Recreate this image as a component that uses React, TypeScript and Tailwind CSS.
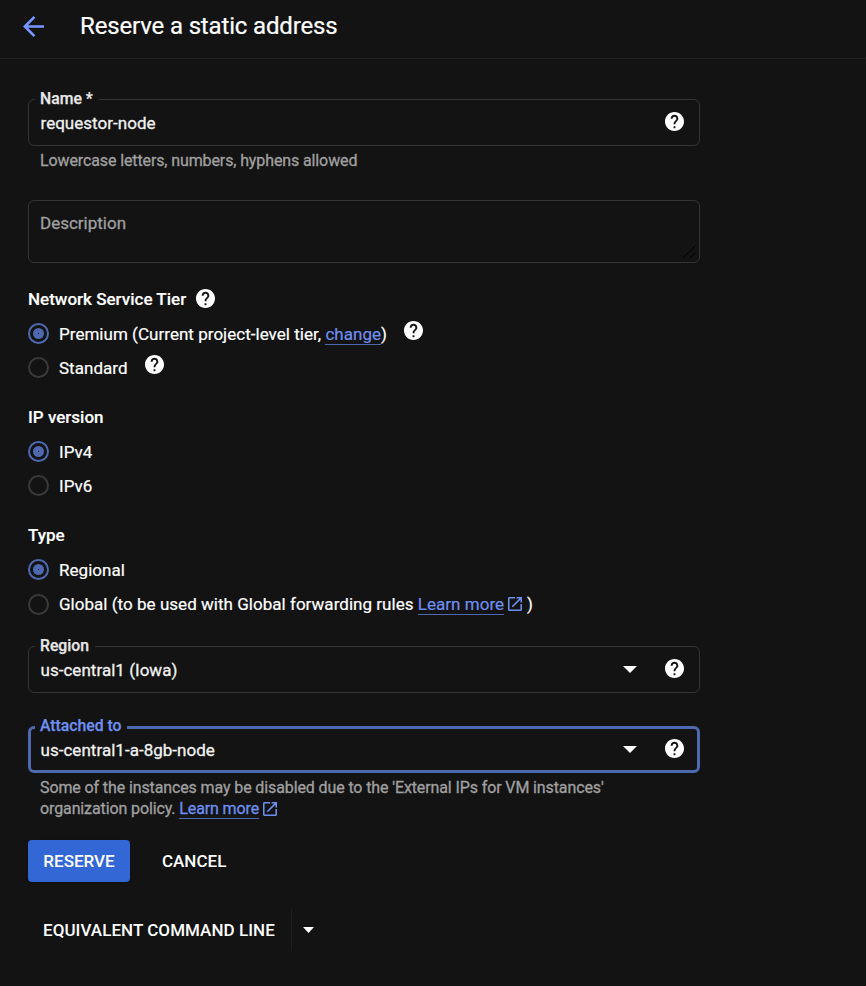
import type { ReactNode } from 'react';

function Help({ className = '' }: { className?: string }) {
  return (
    <svg viewBox="2 2 20 20" className={`block h-[19px] w-[19px] shrink-0 fill-white ${className}`}>
      <path d="M12 2C6.48 2 2 6.48 2 12s4.48 10 10 10 10-4.48 10-10S17.52 2 12 2zm1 17h-2v-2h2v2zm2.07-7.75l-.9.92C13.45 12.9 13 13.5 13 15h-2v-.5c0-1.1.45-2.1 1.17-2.83l1.24-1.26c.37-.36.59-.86.59-1.41 0-1.1-.9-2-2-2s-2 .9-2 2H8c0-2.21 1.79-4 4-4s4 1.79 4 4c0 .88-.36 1.68-.93 2.25z" />
    </svg>
  );
}

function External({ className = '' }: { className?: string }) {
  return (
    <svg viewBox="3 3 18 18" className={`inline-block h-[14px] w-[14px] fill-[#6f8ff0] ${className}`}>
      <path d="M19 19H5V5h7V3H5c-1.11 0-2 .9-2 2v14c0 1.1.89 2 2 2h14c1.1 0 2-.9 2-2v-7h-2v7zM14 3v2h3.59l-9.83 9.83 1.41 1.41L19 6.41V10h2V3h-7z" />
    </svg>
  );
}

function Caret({ className }: { className: string }) {
  return (
    <svg viewBox="0 0 14 7" preserveAspectRatio="none" className={`block shrink-0 fill-white ${className}`}>
      <path d="M0 0h14L7 7z" />
    </svg>
  );
}

function A({ children }: { children: ReactNode }) {
  return <a className="border-b border-[#4f69b0] text-[#6f8ff0]">{children}</a>;
}

function Field({ label, value, select, focused, labelWidth }: { label: string; value: string; select?: boolean; focused?: boolean; labelWidth: string }) {
  return (
    <div className={`relative flex h-[47px] shrink-0 items-center rounded-[6px] ${focused ? 'border-3 border-[#4f69b0] pr-[13.5px] pl-[9.5px]' : 'border border-[#333436] pr-[15.5px] pl-[11.5px]'}`}>
      <span className={`absolute h-5 bg-[#131313] pl-[5px] text-[15.75px] leading-5 font-medium whitespace-nowrap [-webkit-text-stroke:0.25px] ${labelWidth} ${focused ? '-top-[13px] left-1 text-[#6f8ff0]' : '-top-[11px] left-1.5 text-[#e8e8e8]'}`}>{label}</span>
      <span className="flex-1 pt-px text-[17px] tracking-[0.03px] text-[#f1f1f1] [-webkit-text-stroke:0.3px]">{value}</span>
      {select && <Caret className="mr-[28px] h-[7px] w-[14px]" />}
      <Help className="relative -top-[1.5px]" />
    </div>
  );
}

function Radio({ checked, low, children }: { checked?: boolean; low?: boolean; children: ReactNode }) {
  return (
    <div className="flex h-[34px] items-center text-[17px] tracking-[0.03px] text-white [-webkit-text-stroke:0.2px]">
      <span className={`mr-2.5 flex h-[21px] w-[21px] shrink-0 items-center justify-center rounded-full border-2 ${low ? '' : 'mb-px'} ${checked ? 'border-[#4f69b0]' : 'border-[#3a3a3a]'}`}>
        {checked && (
          <span className="flex h-[11px] w-[11px] items-center justify-center rounded-full bg-[#4f69b0]">
            <span className="h-px w-px bg-[#131313]" />
          </span>
        )}
      </span>
      {children}
    </div>
  );
}

function Heading({ children }: { children: ReactNode }) {
  return <h2 className="mb-[7px] flex h-[22px] items-center text-[17px] font-medium text-white [-webkit-text-stroke:0.15px]">{children}</h2>;
}

export default function App() {
  return (
    <div className="h-[986px] w-full overflow-hidden bg-[#131313] font-['Roboto',sans-serif] leading-[21px]">
      <header className="flex h-[59px] items-center border-b border-[#202020] pb-[6px] pl-[22.5px]">
        <svg viewBox="4 4 16 16" className="block h-[21px] w-[21px] fill-[#7597ff]">
          <path d="M20 11H7.83l5.59-5.59L12 4l-8 8 8 8 1.41-1.41L7.83 13H20v-2z" />
        </svg>
        <h1 className="ml-[36.5px] text-[24px] leading-8 tracking-[-0.15px] text-white [-webkit-text-stroke:0.2px]">Reserve a static address</h1>
      </header>
      <main className="flex w-[700px] flex-col pt-10 pl-7">
        <Field label="Name *" value="requestor-node" labelWidth="w-[64px]" />
        <p className="mt-1 h-[21px] pl-3 text-[16px] tracking-[-0.115px] text-[#a0a0a0] [-webkit-text-stroke:0.3px]">Lowercase letters, numbers, hyphens allowed</p>
        <div className="relative mt-[29px] h-[63px] rounded-[6px] border border-[#333436] pt-3 pl-[11px] text-[17px] text-[#a0a0a0] [-webkit-text-stroke:0.3px]">
          Description
          <svg viewBox="0 0 14 14" className="absolute right-[3px] bottom-[3px] h-[14px] w-[14px] fill-none stroke-black">
            <path d="M0.5 13.5L13.5 0.5M7.5 13.5L13.5 7.5" />
          </svg>
        </div>
        <section className="mt-[25px]">
          <Heading>Network Service Tier<Help className="mb-px ml-2.5" /></Heading>
          <Radio checked><span>Premium (Current project-level tier, <A>change</A>)</span><Help className="relative -top-[4px] ml-[17px]" /></Radio>
          <Radio>Standard<Help className="relative -top-[4px] ml-[17px]" /></Radio>
        </section>
        <section className="mt-[21px]">
          <Heading>IP version</Heading>
          <Radio checked>IPv4</Radio>
          <Radio>IPv6</Radio>
        </section>
        <section className="mt-[21px] mb-[25px]">
          <Heading>Type</Heading>
          <Radio checked>Regional</Radio>
          <Radio low><span>Global (to be used with Global forwarding rules <A>Learn more</A><External className="mr-[5px] ml-1 -mt-[2px]" />)</span></Radio>
        </section>
        <Field select label="Region" value="us-central1 (Iowa)" labelWidth="w-[60px]" />
        <div className="h-[33px]" />
        <Field select focused label="Attached to" value="us-central1-a-8gb-node" labelWidth="w-[92px]" />
        <p className="mt-1 pl-3 text-[16px] tracking-[-0.115px] text-[#a0a0a0] [-webkit-text-stroke:0.3px]">
          Some of the instances may be disabled due to the 'External IPs for VM instances'<br />
          organization policy. <A>Learn more</A><External className="-mt-[2px] ml-1" />
        </p>
        <div className="mt-[21px] flex h-[42px] items-center text-[17px] font-medium text-white">
          <button className="h-[42px] w-[102px] rounded-[4px] bg-[#3367d6] shadow-sm">RESERVE</button>
          <button className="ml-8">CANCEL</button>
        </div>
        <div className="mt-[27px] flex h-[42px] items-center pl-[15px] text-[17px] font-medium text-white">
          <button className="w-[248px] text-left tracking-[0.05px] whitespace-nowrap">EQUIVALENT COMMAND LINE</button>
          <span className="h-[42px] w-px bg-[#1f1f1f]" />
          <Caret className="ml-[11px] h-[6px] w-[11px]" />
        </div>
      </main>
    </div>
  );
}
